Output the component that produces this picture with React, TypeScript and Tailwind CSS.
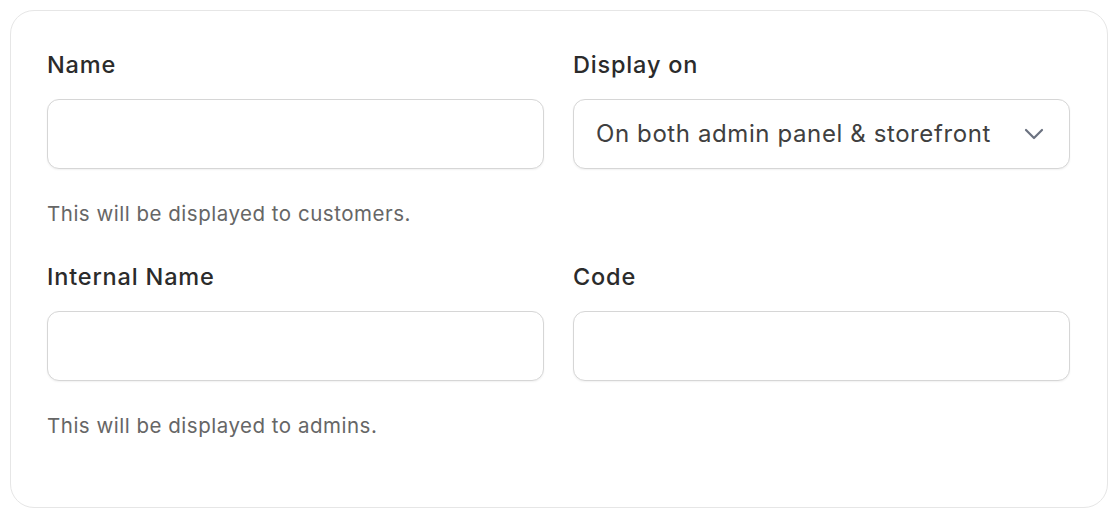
function Chevron() {
  return (
    <svg
      width="20"
      height="12"
      viewBox="0 0 20 12"
      fill="none"
      stroke="currentColor"
      strokeWidth="2.2"
      strokeLinecap="round"
      strokeLinejoin="round"
      className="text-[#6b7280]"
    >
      <path d="M2 2l8 8 8-8" />
    </svg>
  );
}

function Field({ label, children }: { label: string; children: React.ReactNode }) {
  return (
    <div className="flex flex-col">
      <label className="text-[23.5px] leading-[30px] font-medium tracking-[0.035em] text-[#2b2b2b]">
        {label}
      </label>
      <div className="mt-[19px]">{children}</div>
    </div>
  );
}

function TextInput() {
  return (
    <input
      type="text"
      className="w-full h-[70px] rounded-[12px] border border-[#d6d6d6] bg-white px-5 text-[24px] text-[#404040] shadow-[0_1px_2px_rgba(0,0,0,0.06)] outline-none"
    />
  );
}

export default function App() {
  return (
    <div className="p-[10px] bg-white" style={{ fontFamily: 'Inter, "Noto Sans", sans-serif' }}>
      <div className="h-[498px] rounded-[24px] border border-[#e6e6e6] bg-white pl-[36px] pr-[37px] pt-[39px]">
        <div className="grid grid-cols-[497px_497px] gap-x-[29px]">
          <Field label="Name">
            <TextInput />
          </Field>
          <Field label="Display on">
            <button className="flex w-full h-[70px] items-center justify-between rounded-[12px] border border-[#d6d6d6] bg-white pl-[22px] pr-[25px] text-[24px] tracking-[0.025em] text-[#404040] shadow-[0_1px_2px_rgba(0,0,0,0.06)]">
              <span>On both admin panel &amp; storefront</span>
              <Chevron />
            </button>
          </Field>
        </div>
        <p className="mt-[31px] text-[20.5px] leading-[28px] tracking-[0.025em] text-[#666666]">
          This will be displayed to customers.
        </p>
        <div className="mt-[34px] grid grid-cols-[497px_497px] gap-x-[29px]">
          <Field label="Internal Name">
            <TextInput />
          </Field>
          <Field label="Code">
            <TextInput />
          </Field>
        </div>
        <p className="mt-[31px] text-[20.5px] leading-[28px] tracking-[0.025em] text-[#666666]">
          This will be displayed to admins.
        </p>
      </div>
    </div>
  );
}
